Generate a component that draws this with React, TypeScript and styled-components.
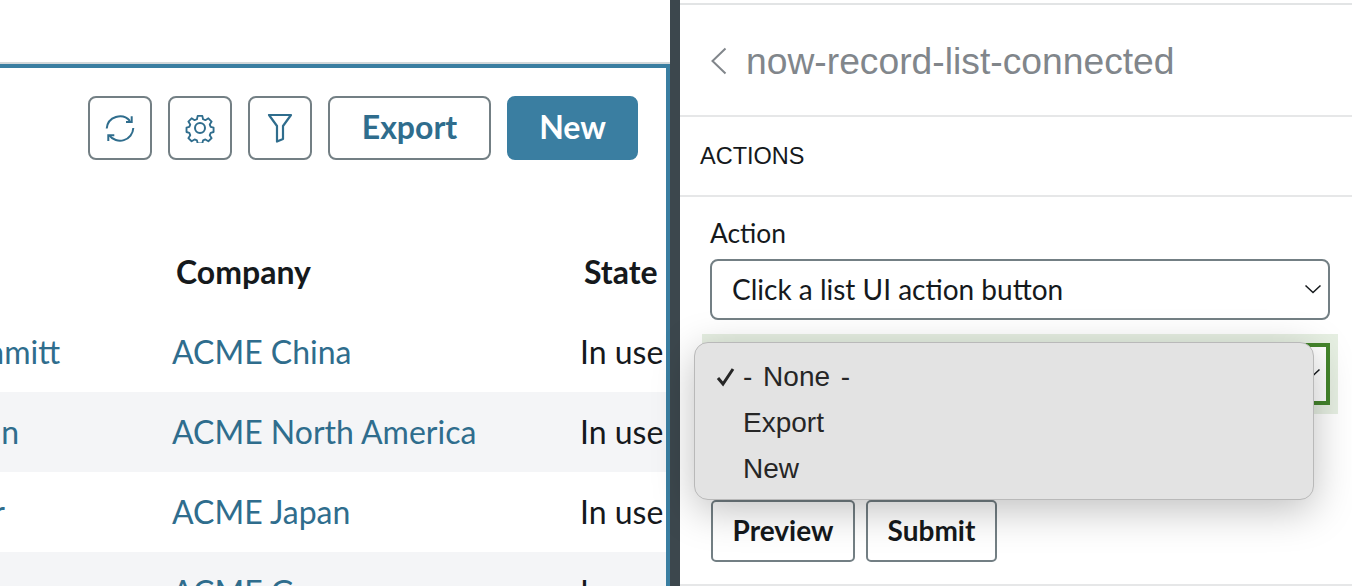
import React from "react"
import styled, { createGlobalStyle } from "styled-components"

const Global = createGlobalStyle`
    html, body {
        margin:0;
        padding:0;
        background:#fff;
    }
    * {
        box-sizing:border-box;
    }
`
const Page = styled.div`
    display:flex;
    width:1352px;
    height:586px;
    overflow:hidden;
    font-family:Lato, "Liberation Sans", sans-serif;
    color:#15191c;
`
const ListPane = styled.div`
    width:670px;
    flex:none;
    display:flex;
    flex-direction:column;
`
const TopGap = styled.div`
    height:64px;
    flex:none;
    border-bottom:2px solid #d3d8da;
`
const ListCard = styled.div`
    flex:1;
    border-top:4px solid #3a7ea1;
    border-right:4px solid #3a7ea1;
    overflow:hidden;
`
const Toolbar = styled.div`
    display:flex;
    justify-content:flex-end;
    gap:16px;
    padding:28px 28px 0 0;
`
const IconButton = styled.button`
    width:64px;
    height:64px;
    padding:0;
    display:flex;
    align-items:center;
    justify-content:center;
    background:#fff;
    border:2px solid #737f84;
    border-radius:8px;
`
const ToolButton = styled.button<{ $primary?: boolean }>`
    height:64px;
    width:${p => (p.$primary ? "131px" : "163px")};
    padding:0 0 4px 0;
    font-family:Lato, sans-serif;
    font-weight:700;
    font-size:32px;
    color:${p => (p.$primary ? "#fff" : "#2f6d8d")};
    background:${p => (p.$primary ? "#3a7ea1" : "#fff")};
    border:2px solid ${p => (p.$primary ? "#3a7ea1" : "#737f84")};
    border-radius:8px;
`
const HeaderRow = styled.div`
    display:flex;
    align-items:center;
    height:80px;
    margin-top:72px;
    padding-bottom:2px;
    font-weight:700;
    font-size:32px;
    white-space:nowrap;
`
const CompanyHead = styled.div`
    width:584px;
    padding-left:176px;
    flex:none;
`
const Row = styled.div<{ $striped?: boolean }>`
    display:flex;
    align-items:center;
    height:80px;
    padding-bottom:2px;
    font-size:32px;
    white-space:nowrap;
    background:${p => (p.$striped ? "#f4f5f7" : "#fff")};
`
const NameCell = styled.div<{ $end: number }>`
    width:172px;
    flex:none;
    display:flex;
    justify-content:flex-end;
    overflow:hidden;
    padding-right:${p => p.$end}px;
    color:#2f6d8d;
`
const CompanyCell = styled.div`
    width:408px;
    flex:none;
    color:#2f6d8d;
`
const StateCell = styled.div`
    color:#15191c;
`
const Divider = styled.div`
    width:10px;
    flex:none;
    background:#3c474d;
`
const SidePane = styled.div`
    flex:1;
    display:flex;
    flex-direction:column;
    padding-top:3px;
`
const TitleBar = styled.div`
    height:114px;
    flex:none;
    display:flex;
    align-items:center;
    gap:18px;
    padding:2px 0 0 30px;
    border-top:2px solid #e2e4e5;
    border-bottom:2px solid #e6e7e8;
    font-family:"Liberation Sans", Arial, sans-serif;
    font-size:37.250px;
    color:#81868b;
`
const SectionBar = styled.div`
    height:80px;
    flex:none;
    display:flex;
    align-items:center;
    padding-left:20px;
    border-bottom:2px solid #e6e7e8;
    font-family:"Liberation Sans", Arial, sans-serif;
    font-size:23.500px;
    color:#15191c;
`
const Form = styled.div`
    flex:1;
    display:flex;
    flex-direction:column;
    padding:18px 22px 0 30px;
`
const Label = styled.div`
    font-size:26.400px;
    line-height:36px;
    height:44px;
`
const Select = styled.div<{ $valid?: boolean }>`
    height:${p => (p.$valid ? "62px" : "61px")};
    display:flex;
    align-items:center;
    justify-content:${p => (p.$valid ? "flex-end" : "space-between")};
    padding:0 ${p => (p.$valid ? "5px" : "6px")} 2px 20px;
    font-size:28px;
    background:#fff;
    border:${p => (p.$valid ? "4px solid #44852c" : "2px solid #737f84")};
    border-radius:${p => (p.$valid ? "0" : "8px")};
`
const Highlight = styled.div`
    position:relative;
    height:80px;
    margin:14px -8px 0 -8px;
    padding:9px 8px 0 8px;
    background:#e6efe2;
`
const Menu = styled.div`
    position:absolute;
    left:-8px;
    top:8px;
    width:620px;
    height:158px;
    padding:11px 0 9px 0;
    background:#e3e3e3;
    border:1px solid #b9b9b9;
    border-radius:14px;
    box-shadow:0 10px 40px rgba(0, 0, 0, 0.25);
    font-family:"Liberation Sans", Arial, sans-serif;
    font-size:28px;
    word-spacing:3px;
    color:#262626;
`
const MenuItem = styled.div`
    display:flex;
    align-items:center;
    height:46px;
    padding-left:48px;
    position:relative;
`
const Tick = styled.svg`
    position:absolute;
    left:21px;
    top:13px;
`
const Actions = styled.div`
    display:flex;
    gap:11px;
    margin-top:86px;
    margin-left:1px;
`
const ActionButton = styled.button<{ $width: number }>`
    width:${p => p.$width}px;
    height:62px;
    padding:0 0 3px 0;
    font-family:Lato, sans-serif;
    font-weight:700;
    font-size:28px;
    color:#15191c;
    background:#fff;
    border:2px solid #737f84;
    border-radius:5px;
`
const BottomLine = styled.div`
    height:2px;
    flex:none;
    background:#e6e7e8;
`

const RefreshIcon = () => (
    <svg width="30" height="30" viewBox="0 0 30 30" fill="none" stroke="#2f6d8d" strokeWidth="2">
        <path d="M1.700 15.500A13.300 13.300 0 0 1 25 8" />
        <path d="M28.300 15A13.300 13.300 0 0 1 4.300 22.300" />
        <path d="M21 9h5.700V3.300" />
        <path d="M9.300 22.300H3.300V28" />
    </svg>
)

const GearIcon = () => (
    <svg width="30" height="30" viewBox="0 0 30 30" fill="none" stroke="#2f6d8d" strokeWidth="2" strokeLinejoin="round">
        <circle cx="15" cy="15" r="5" />
        <path d="M12.500 2h5l.8 3.600 2.500 1 3.200-2 3.500 3.500-2 3.200 1 2.500 3.100.9v4.600l-3.100.9-1 2.500 2 3.200-3.500 3.300-3.200-1.900-2.500 1-.8 3.300h-5l-.8-3.300-2.500-1-3.200 1.900-3.500-3.300 2-3.200-1-2.500-3-.9v-4.600l3-.9 1-2.500-2-3.200 3.500-3.500 3.200 2 2.500-1z" transform="translate(15 15) scale(.93) translate(-15 -15)" />
    </svg>
)

const FunnelIcon = () => (
    <svg width="26" height="30" viewBox="0 0 26 30" fill="none" stroke="#2f6d8d" strokeWidth="2.200" strokeLinejoin="round">
        <path d="M2 2h22l-8 11v13l-6 2.500V13z" />
    </svg>
)

const BackIcon = () => (
    <svg width="18" height="28" viewBox="0 0 18 28" fill="none" stroke="#81868b" strokeWidth="2">
        <path d="M15.500 1.500L2.500 14l13 12.500" />
    </svg>
)

const ChevronIcon = () => (
    <svg width="18" height="10" viewBox="0 0 18 10" fill="none" stroke="#15191c" strokeWidth="1.500">
        <path d="M1.500 1.500L9 8.500l7.500-7" />
    </svg>
)

const rows = [
    { name: "Schmitt", end: 112, company: "ACME China" },
    { name: "Jordan", end: 153, company: "ACME North America" },
    { name: "Walter", end: 167, company: "ACME Japan" },
    { name: "Bauer", end: 167, company: "ACME Germany" },
]

const App: React.FC = () => {
    return (
        <Page>
            <Global />
            <ListPane>
                <TopGap />
                <ListCard>
                    <Toolbar>
                        <IconButton><RefreshIcon /></IconButton>
                        <IconButton><GearIcon /></IconButton>
                        <IconButton><FunnelIcon /></IconButton>
                        <ToolButton>Export</ToolButton>
                        <ToolButton $primary>New</ToolButton>
                    </Toolbar>
                    <HeaderRow>
                        <CompanyHead>Company</CompanyHead>
                        <div>State</div>
                    </HeaderRow>
                    {rows.map((row, i) => (
                        <Row key={row.company} $striped={i % 2 === 1}>
                            <NameCell $end={row.end}>{row.name}</NameCell>
                            <CompanyCell>{row.company}</CompanyCell>
                            <StateCell>In use</StateCell>
                        </Row>
                    ))}
                </ListCard>
            </ListPane>
            <Divider />
            <SidePane>
                <TitleBar>
                    <BackIcon />
                    now-record-list-connected
                </TitleBar>
                <SectionBar>ACTIONS</SectionBar>
                <Form>
                    <Label>Action</Label>
                    <Select>
                        Click a list UI action button
                        <ChevronIcon />
                    </Select>
                    <Highlight>
                        <Select $valid>
                            <ChevronIcon />
                        </Select>
                        <Menu>
                            <MenuItem>
                                <Tick width="20" height="20" viewBox="0 0 20 20" fill="none" stroke="#262626" strokeWidth="3">
                                    <path d="M2 11l5 6L17 2" />
                                </Tick>
                                - None -
                            </MenuItem>
                            <MenuItem>Export</MenuItem>
                            <MenuItem>New</MenuItem>
                        </Menu>
                    </Highlight>
                    <Actions>
                        <ActionButton $width={144}>Preview</ActionButton>
                        <ActionButton $width={131}>Submit</ActionButton>
                    </Actions>
                </Form>
                <BottomLine />
            </SidePane>
        </Page>
    )
}
export default App
